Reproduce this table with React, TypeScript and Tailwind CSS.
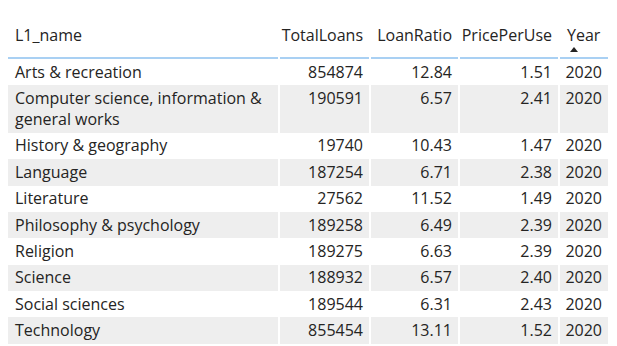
const rows = [
  { name: 'Arts & recreation', loans: '854874', ratio: '12.84', price: '1.51', year: '2020' },
  { name: 'Computer science, information & general works', loans: '190591', ratio: '6.57', price: '2.41', year: '2020' },
  { name: 'History & geography', loans: '19740', ratio: '10.43', price: '1.47', year: '2020' },
  { name: 'Language', loans: '187254', ratio: '6.71', price: '2.38', year: '2020' },
  { name: 'Literature', loans: '27562', ratio: '11.52', price: '1.49', year: '2020' },
  { name: 'Philosophy & psychology', loans: '189258', ratio: '6.49', price: '2.39', year: '2020' },
  { name: 'Religion', loans: '189275', ratio: '6.63', price: '2.39', year: '2020' },
  { name: 'Science', loans: '188932', ratio: '6.57', price: '2.40', year: '2020' },
  { name: 'Social sciences', loans: '189544', ratio: '6.31', price: '2.43', year: '2020' },
  { name: 'Technology', loans: '855454', ratio: '13.11', price: '1.52', year: '2020' },
]

const cols = 'grid grid-cols-[270px_89px_87px_98px_48px] gap-x-[2px]'

export default function App() {
  return (
    <div
      className="w-[617px] h-[346px] bg-white pl-[8px] pt-[24px] text-[16px] leading-[21px] text-[#252423]"
      style={{ fontFamily: '"Segoe UI", "Open Sans", sans-serif' }}
    >
      {/* Header */}
      <div className={cols}>
        <div className="border-b-2 border-[#a9d0f3] pl-[7px] pt-[1px]">L1_name</div>
        <div className="border-b-2 border-[#a9d0f3] pr-[6px] pt-[1px] text-right">TotalLoans</div>
        <div className="border-b-2 border-[#a9d0f3] pr-[6px] pt-[1px] text-right">LoanRatio</div>
        <div className="border-b-2 border-[#a9d0f3] pr-[6px] pt-[1px] text-right">PricePerUse</div>
        <div className="border-b-2 border-[#a9d0f3] pl-[7px] pt-[1px] pb-[5px] flex flex-col">
          <span>Year</span>
          <svg className="ml-[3px] mt-[1px]" width="8" height="5" viewBox="0 0 8 5">
            <path d="M0 5 L4 0 L8 5 Z" fill="#252423" />
          </svg>
        </div>
      </div>

      {/* Rows */}
      {rows.map((r, i) => {
        const bg = i % 2 === 1 ? 'bg-[#eeeeee]' : 'bg-white'
        return (
          <div key={r.name} className={cols}>
            <div className={`${bg} pl-[7px] pr-[4px] py-[2.7px]`}>{r.name}</div>
            <div className={`${bg} pr-[6px] py-[2.7px] text-right`}>{r.loans}</div>
            <div className={`${bg} pr-[6px] py-[2.7px] text-right`}>{r.ratio}</div>
            <div className={`${bg} pr-[6px] py-[2.7px] text-right`}>{r.price}</div>
            <div className={`${bg} pr-[6px] py-[2.7px] text-right`}>{r.year}</div>
          </div>
        )
      })}
    </div>
  )
}
